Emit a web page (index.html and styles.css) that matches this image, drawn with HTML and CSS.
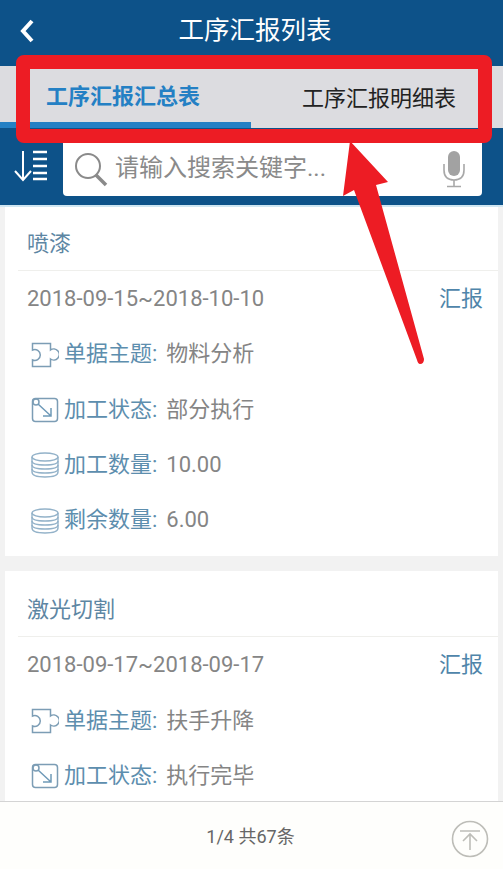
FILE: index.html
```html
<!DOCTYPE html>
<html>

	<head>
		<meta charset="utf-8" />
		<title>工序汇报列表</title>
		<link rel="stylesheet" href="styles.css">
	</head>

	<body>
		<div class="page">
			<div class="header">
				<svg class="back" width="16" height="26" viewBox="0 0 16 26"><path d="M13 3 L4 13 L13 23" fill="none" stroke="#fff" stroke-width="4" /></svg>
				<span class="header_title">工序汇报列表</span>
			</div>
			<div class="tabs">
				<div class="tab tab_on">工序汇报汇总表</div>
				<div class="tab">工序汇报明细表</div>
			</div>
			<div class="search">
				<svg class="sort" width="36" height="32" viewBox="0 0 36 32">
					<path d="M10 1 V30 M2 21 L10 30 L18 21" fill="none" stroke="#fff" stroke-width="2" />
					<path d="M20 2 H34 M20 9 H34 M20 16 H34 M20 23 H34 M20 29 H34" stroke="#fff" stroke-width="2.4" />
				</svg>
				<div class="search_box">
					<svg class="glass" width="36" height="36" viewBox="0 0 36 36">
						<circle cx="15" cy="15" r="12" fill="none" stroke="#8a8a8a" stroke-width="2" />
						<path d="M23 24 L33 34" stroke="#8a8a8a" stroke-width="3.6" />
					</svg>
					<span class="search_text">请输入搜索关键字...</span>
					<svg class="mic" width="24" height="38" viewBox="0 0 24 38">
						<rect x="6" y="1" width="12" height="25" rx="6" fill="#a2a2a2" />
						<path d="M2 14 V20 C2 27 6 30 12 30 C18 30 22 27 22 20 V14 M12 30 V36 M5 36.500 H19" fill="none" stroke="#a8a8a8" stroke-width="1.600" />
					</svg>
				</div>
			</div>
			<div class="list">
				<div class="card">
					<div class="card_title">喷漆</div>
					<div class="card_date"><span>2018-09-15~2018-10-10</span><span class="report">汇报</span></div>
					<div class="row">
						<svg class="icon" viewBox="0 0 28 26"><use href="#puzzle" /></svg>
						<span class="label">单据主题:</span><span class="value">物料分析</span>
					</div>
					<div class="row">
						<svg class="icon" viewBox="0 0 28 26"><use href="#box" /></svg>
						<span class="label">加工状态:</span><span class="value">部分执行</span>
					</div>
					<div class="row">
						<svg class="icon" viewBox="0 0 28 26"><use href="#disks" /></svg>
						<span class="label">加工数量:</span><span class="value">10.00</span>
					</div>
					<div class="row">
						<svg class="icon" viewBox="0 0 28 26"><use href="#disks" /></svg>
						<span class="label">剩余数量:</span><span class="value">6.00</span>
					</div>
				</div>
				<div class="card">
					<div class="card_title">激光切割</div>
					<div class="card_date"><span>2018-09-17~2018-09-17</span><span class="report">汇报</span></div>
					<div class="row">
						<svg class="icon" viewBox="0 0 28 26"><use href="#puzzle" /></svg>
						<span class="label">单据主题:</span><span class="value">扶手升降</span>
					</div>
					<div class="row">
						<svg class="icon" viewBox="0 0 28 26"><use href="#box" /></svg>
						<span class="label">加工状态:</span><span class="value">执行完毕</span>
					</div>
				</div>
			</div>
			<div class="footer">
				<span class="pages">1/4 共67条</span>
				<svg class="top" width="38" height="38" viewBox="0 0 38 38">
					<circle cx="19" cy="19" r="17.500" fill="none" stroke="#bdbdb8" stroke-width="1.600" />
					<path d="M9 11 H29 M19 14 V30 M12 21 L19 14 L26 21" fill="none" stroke="#bdbdb8" stroke-width="1.600" />
				</svg>
			</div>
		</div>

		<!-- 红色标注 -->
		<div class="mark_box"></div>
		<svg class="mark_arrow" width="90" height="225" viewBox="340 140 90 225">
			<path d="M350 141 L388 182 L376 185 L424 359 Q424 364 420 364 Q418 364 417 360 L354 190 L343 196 Z" fill="#ed1c24" />
		</svg>

		<svg class="defs" width="0" height="0">
			<defs>
				<g id="puzzle" fill="none" stroke="#7c9db5" stroke-width="1.500">
					<path d="M1.500 1.500 H19.500 V8 A5.500 5.500 0 1 1 19.500 17 V24.500 H1.500 V18 A5.500 5.500 0 1 0 1.500 8 Z" />
				</g>
				<g id="box" fill="none" stroke="#7c9db5" stroke-width="1.500">
					<rect x="1.500" y="1.500" width="25" height="23" rx="3" />
					<circle cx="5" cy="5" r="3" />
					<path d="M7 7 L20 19 M20 11 V19 H12" stroke="#6f9ab8" />
				</g>
				<g id="disks" fill="none" stroke="#93b2c9" stroke-width="1.400">
					<ellipse cx="14" cy="5" rx="13" ry="4" />
					<path d="M1 5 V20 C1 23 6 25 14 25 C22 25 27 23 27 20 V5" />
					<path d="M1 9 C1 12 6 13 14 13 C22 13 27 12 27 9" />
					<path d="M1 13 C1 16 6 17 14 17 C22 17 27 16 27 13" />
					<path d="M1 17 C1 20 6 21 14 21 C22 21 27 20 27 17" />
				</g>
			</defs>
		</svg>
	</body>

</html>
```

FILE: styles.css
```css
* {
	margin: 0;
	padding: 0;
	box-sizing: border-box;
}

body {
	font-family: Roboto, "Noto Sans CJK SC", sans-serif;
	line-height: 1.2;
	background-color: #f2f2f2;
	overflow: hidden;
}

.page {
	display: flex;
	flex-direction: column;
	height: 869px;
}

.header {
	display: flex;
	align-items: center;
	justify-content: center;
	position: relative;
	height: 66px;
	padding-bottom: 6px;
	background-color: #0d5289;
}

.back {
	position: absolute;
	left: 19px;
	top: 18px;
}

.header_title {
	font-size: 25.500px;
	margin-left: 7px;
	color: #fff;
}

.tabs {
	display: flex;
	height: 62px;
	background-color: #dcdce0;
}

.tab {
	flex: 1;
	display: flex;
	align-items: center;
	justify-content: flex-end;
	padding: 4px 47px 0 0;
	font-size: 22px;
	color: #222;
}

.tab_on {
	justify-content: flex-start;
	padding: 6px 0 0 46px;
	font-weight: bold;
	color: #2480c4;
	border-bottom: 6px solid #2480c4;
}

.search {
	display: flex;
	align-items: center;
	height: 79px;
	padding: 8px 21px 9px 13px;
	background-color: #0d5289;
	border-bottom: 2px solid #cfe6f2;
}

.sort {
	flex: none;
	margin-right: 14px;
}

.search_box {
	flex: 1;
	display: flex;
	align-items: center;
	height: 60px;
	padding: 5px 16px 0 10px;
	background-color: #fff;
	border-radius: 4px;
}

.search_text {
	flex: 1;
	margin-left: 6px;
	font-size: 24px;
	color: #8a8a8a;
}

.list {
	flex: 1;
	overflow: hidden;
	padding: 0 5px;
}

.card {
	padding-bottom: 9px;
	margin-bottom: 15px;
	background-color: #fff;
}

.card:first-child {
	margin-top: -2px;
}

.card_title {
	display: flex;
	align-items: center;
	height: 66px;
	margin-left: 13px;
	padding: 13px 0 0 9px;
	font-size: 22px;
	color: #5d86a3;
	border-bottom: 1px solid #efefec;
}

.card_date {
	display: flex;
	align-items: center;
	justify-content: space-between;
	height: 55px;
	padding: 2px 15px 0 22px;
	font-size: 22px;
	color: #858585;
}

.report {
	color: #4f85aa;
}

.row {
	display: flex;
	align-items: center;
	height: 55.300px;
	padding-left: 26px;
	padding-top: 2px;
	font-size: 22px;
}

.icon {
	flex: none;
	width: 28px;
	height: 26px;
	margin-right: 5px;
}

.label {
	margin-right: 9px;
	color: #5d8eae;
}

.value {
	color: #858585;
}

.footer {
	display: flex;
	align-items: center;
	justify-content: center;
	position: relative;
	height: 68px;
	background-color: #fefefc;
	border-top: 1px solid #d4d4d4;
}

.pages {
	padding: 3px 2px 0 0;
	font-size: 18px;
	color: #666;
}

.top {
	position: absolute;
	right: 14px;
	top: 18px;
}

.mark_box {
	position: absolute;
	left: 16px;
	top: 55px;
	width: 476px;
	height: 88px;
	border: 14px solid #ed1c24;
	border-radius: 8px;
}

.mark_arrow {
	position: absolute;
	left: 340px;
	top: 140px;
}

.defs {
	position: absolute;
}
```
